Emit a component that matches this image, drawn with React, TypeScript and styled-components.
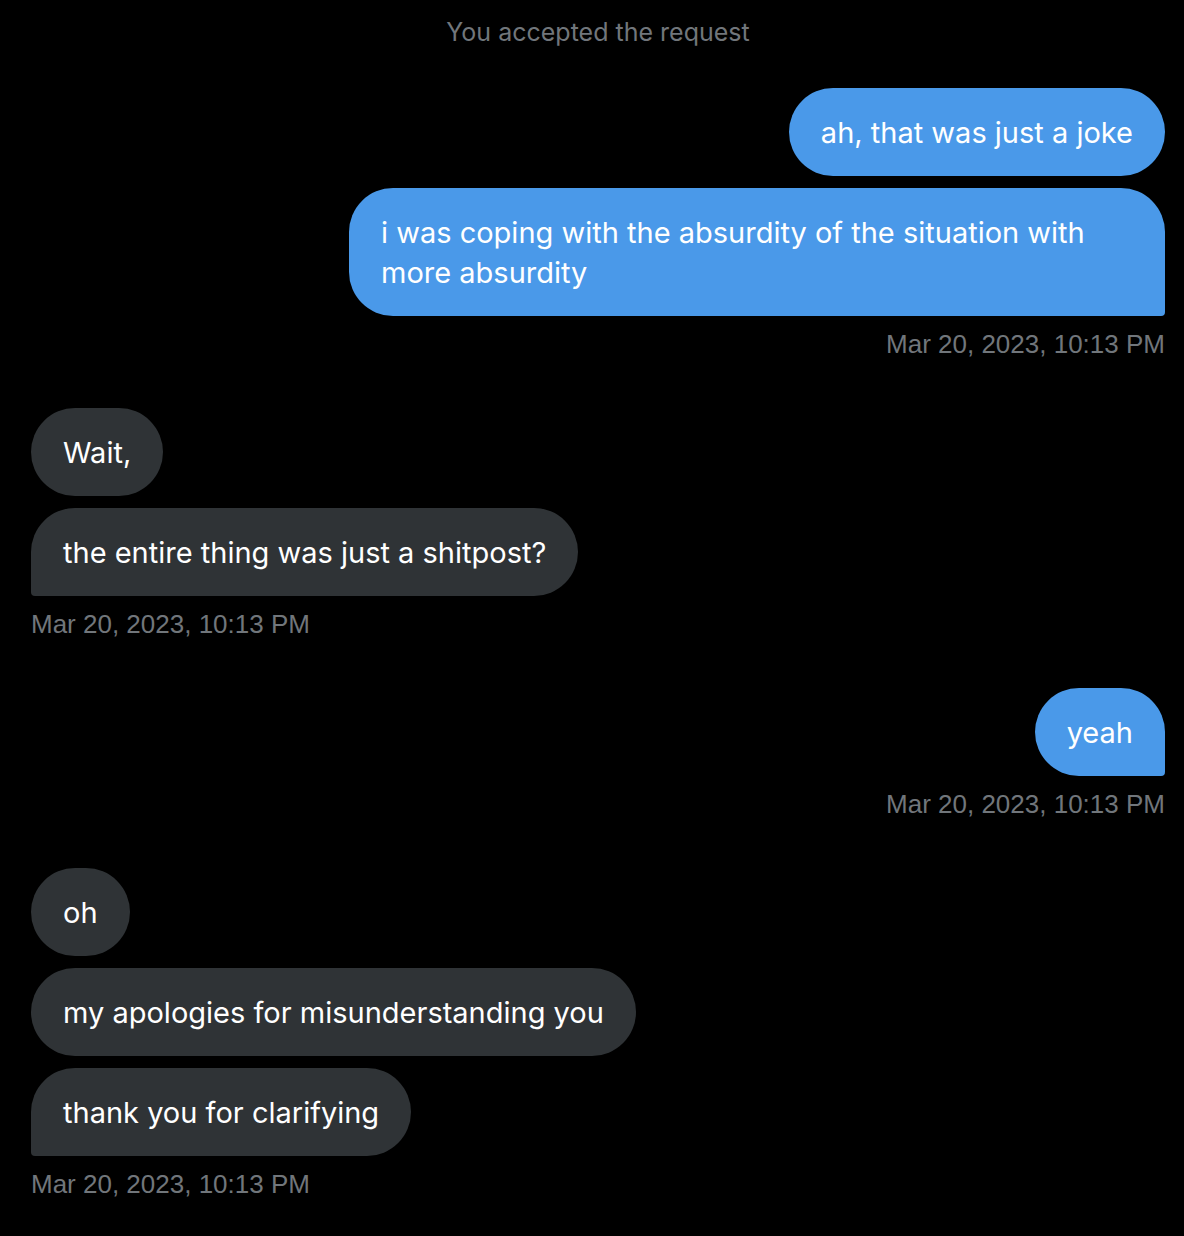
import React from "react";
import styled, { createGlobalStyle } from "styled-components";

const Global = createGlobalStyle`
  html, body { margin: 0; padding: 0; background: #000; }
  body { font-family: Inter, "Noto Sans", sans-serif; -webkit-font-smoothing: antialiased; }
  * { box-sizing: border-box; }
`;

const Page = styled.div`
  width: 1184px;
  min-height: 1236px;
  background: #000;
  padding: 16px 19px 0 31px;
  display: flex;
  flex-direction: column;
`;

const Notice = styled.div`
  text-align: center;
  color: #71767b;
  font-size: 25px;
  line-height: 32px;
  height: 32px;
  margin-bottom: 40px;
`;

const Group = styled.div<{ $mine: boolean }>`
  display: flex;
  flex-direction: column;
  align-items: ${(p) => (p.$mine ? "flex-end" : "flex-start")};
  gap: 12px;
  margin-bottom: 48px;
`;

const Bubble = styled.div<{ $mine: boolean; $last: boolean }>`
  max-width: 816px;
  padding: 25px 32px 23px;
  font-size: 29px;
  line-height: 40px;
  color: #fff;
  background: ${(p) => (p.$mine ? "#4a99e9" : "#2f3336")};
  border-radius: 44px;
  ${(p) =>
    p.$last
      ? p.$mine
        ? "border-bottom-right-radius: 4px;"
        : "border-bottom-left-radius: 4px;"
      : ""}
`;

const Stamp = styled.div`
  font-family: "Liberation Sans", Arial, sans-serif;
  font-size: 26px;
  line-height: 32px;
  color: #71767b;
`;

type G = { mine: boolean; msgs: string[] };

const groups: G[] = [
  { mine: true, msgs: ["ah, that was just a joke", "i was coping with the absurdity of the situation with more absurdity"] },
  { mine: false, msgs: ["Wait,", "the entire thing was just a shitpost?"] },
  { mine: true, msgs: ["yeah"] },
  { mine: false, msgs: ["oh", "my apologies for misunderstanding you", "thank you for clarifying"] },
];

export default function App() {
  return (
    <>
      <Global />
      <Page>
        <Notice>You accepted the request</Notice>
        {groups.map((g, gi) => (
          <Group key={gi} $mine={g.mine}>
            {g.msgs.map((m, i) => (
              <Bubble key={i} $mine={g.mine} $last={i === g.msgs.length - 1}>
                {m}
              </Bubble>
            ))}
            <Stamp>Mar 20, 2023, 10:13 PM</Stamp>
          </Group>
        ))}
      </Page>
    </>
  );
}
